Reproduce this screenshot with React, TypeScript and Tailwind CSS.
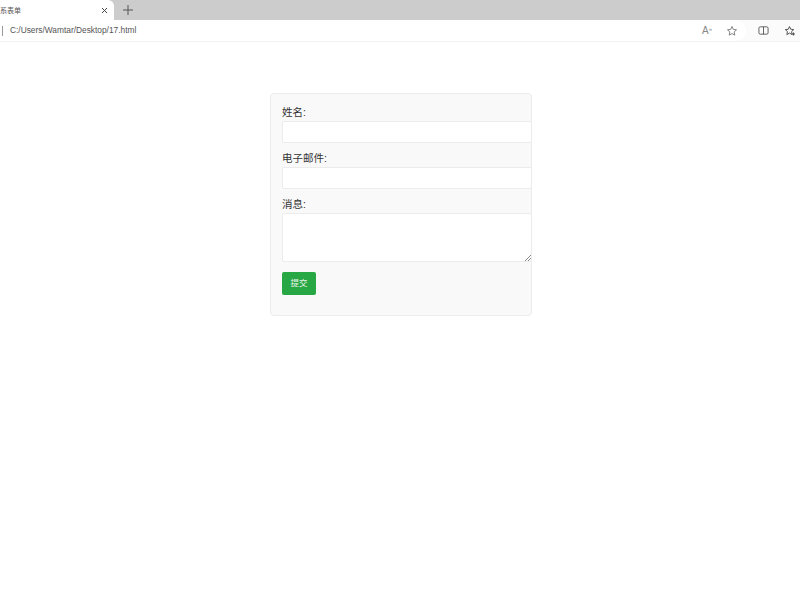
import React from "react";

const font = { fontFamily: '"Liberation Sans","Noto Sans CJK SC",sans-serif' };

function Label({ children }: { children: React.ReactNode }) {
  return <label className="block h-[17px] text-[10.5px] leading-[17px] text-[#333]">{children}</label>;
}

export default function App() {
  return (
    <div className="w-[800px] h-[600px] bg-white overflow-hidden flex flex-col" style={font}>
      <div className="h-[20px] bg-[#cccccc] flex items-start shrink-0">
        <div className="w-[114px] h-[20px] bg-white rounded-tr-[6px] flex items-center justify-between pr-[6px]">
          <span className="text-[7px] text-[#555] leading-none">系表单</span>
          <svg width="7" height="7" viewBox="0 0 7 7" className="text-[#444]">
            <path d="M1 1l5 5M6 1l-5 5" stroke="currentColor" strokeWidth="1" fill="none" />
          </svg>
        </div>
        <div className="w-[27px] h-[20px] flex items-center justify-center">
          <svg width="10" height="10" viewBox="0 0 10 10" className="text-[#555]">
            <path d="M5 0v10M0 5h10" stroke="currentColor" strokeWidth="1" fill="none" />
          </svg>
        </div>
      </div>
      <div className="h-[22px] bg-[#fbfbfb] flex items-center shrink-0 border-b border-[#f2f2f2]">
        <div className="flex items-center h-full w-[746px] bg-white rounded-r-[10px]">
          <div className="w-[1px] h-[10px] bg-[#999] ml-[2px]" />
          <span className="ml-[7px] text-[8.35px] text-[#555] leading-none">C:/Users/Wamtar/Desktop/17.html</span>
          <div className="ml-auto flex items-center h-full">
            <span className="w-[12px] text-[10px] text-[#888] leading-none mr-[12px] flex">A<span className="text-[6px]">»</span></span>
            <svg width="12" height="12" viewBox="0 0 24 24" fill="none" stroke="#777" strokeWidth="1.8" strokeLinejoin="round" className="mr-[8px]">
              <path d="M12 3l2.7 5.9 6.3.7-4.7 4.3 1.3 6.4L12 17.1l-5.6 3.2 1.3-6.4L3 9.6l6.3-.7z" />
            </svg>
          </div>
        </div>
        <svg width="11" height="11" viewBox="0 0 24 24" fill="none" stroke="#555" strokeWidth="2" className="ml-[12px]">
          <rect x="2" y="4" width="20" height="16" rx="3" />
          <path d="M12 4v16" />
        </svg>
        <svg width="12" height="12" viewBox="0 0 24 24" fill="none" stroke="#555" strokeWidth="2" strokeLinejoin="round" className="ml-[15px]">
          <path d="M11 3l2.5 5.5 6 .7-4.4 4 1.2 6L11 16.2l-5.3 3 1.2-6-4.4-4 6-.7z" />
          <path d="M19 15v6M16 18h6" />
        </svg>
      </div>
      <div className="flex-1 pt-[51px] pl-[270px]">
        <form className="w-[262px] h-[223px] bg-[#f9f9f9] border border-[#ececec] rounded-[4px] pt-[10px] pl-[11px]">
          <Label>姓名:</Label>
          <div className="w-[250px] h-[22px] bg-white border border-[#ececec] rounded-[2px]" />
          <div className="h-[7px]" />
          <Label>电子邮件:</Label>
          <div className="w-[250px] h-[22px] bg-white border border-[#ececec] rounded-[2px]" />
          <div className="h-[7px]" />
          <Label>消息:</Label>
          <div className="relative w-[250px] h-[49px] bg-white border border-[#ececec] rounded-[2px]">
            <svg width="6" height="6" viewBox="0 0 6 6" className="absolute right-0 bottom-0">
              <path d="M6 0L0 6M6 3L3 6" stroke="#888" strokeWidth="1" />
            </svg>
          </div>
          <button type="button" className="block mt-[10px] w-[34px] h-[23px] bg-[#28a745] rounded-[2px] text-[#e8f5ea] text-[8.5px] leading-none">提交</button>
        </form>
      </div>
    </div>
  );
}
